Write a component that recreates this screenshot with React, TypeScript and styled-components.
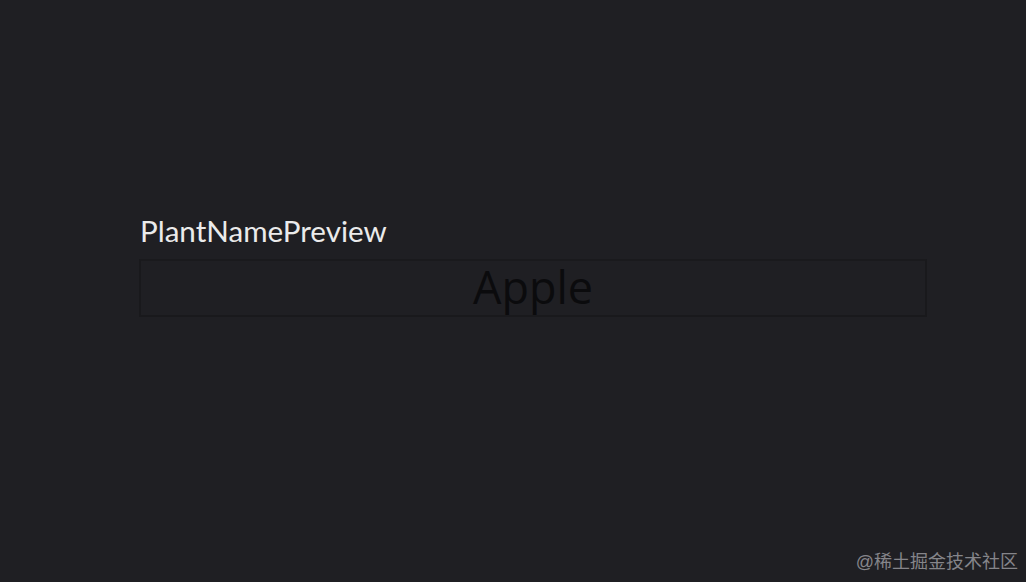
import React from "react";
import styled, { createGlobalStyle } from "styled-components";

const Global = createGlobalStyle`
  html, body { margin: 0; padding: 0; background: #1f1f23; }
  #root { width: 1026px; height: 582px; }
`;

const Page = styled.div`
  position: relative;
  width: 1026px;
  height: 582px;
  box-sizing: border-box;
  background: #1f1f23;
  padding: 212px 99px 0 139px;
  display: flex;
  flex-direction: column;
`;

const Label = styled.div`
  font-family: "Lato", "Open Sans", sans-serif;
  font-size: 29.6px;
  line-height: 38px;
  color: #ebebeb;
  padding-left: 1px;
  margin-bottom: 9px;
`;

const Preview = styled.div`
  height: 58px;
  box-sizing: border-box;
  border: 2px solid #19191c;
  border-top-color: #1a1a1d;
  background: #1f1f23;
  display: flex;
  align-items: center;
  justify-content: center;
  padding-bottom: 4px;
  font-family: "Open Sans", "Noto Sans", sans-serif;
  font-size: 45px;
  color: #0b0b0d;
  line-height: 1;
`;

const Watermark = styled.div`
  position: absolute;
  right: 8px;
  bottom: 9px;
  font-family: "Liberation Sans", "Noto Sans CJK SC", sans-serif;
  font-size: 18px;
  color: #85858a;
`;

export default function App() {
  return (
    <>
      <Global />
      <Page>
        <Label>PlantNamePreview</Label>
        <Preview>Apple</Preview>
        <Watermark>@稀土掘金技术社区</Watermark>
      </Page>
    </>
  );
}
